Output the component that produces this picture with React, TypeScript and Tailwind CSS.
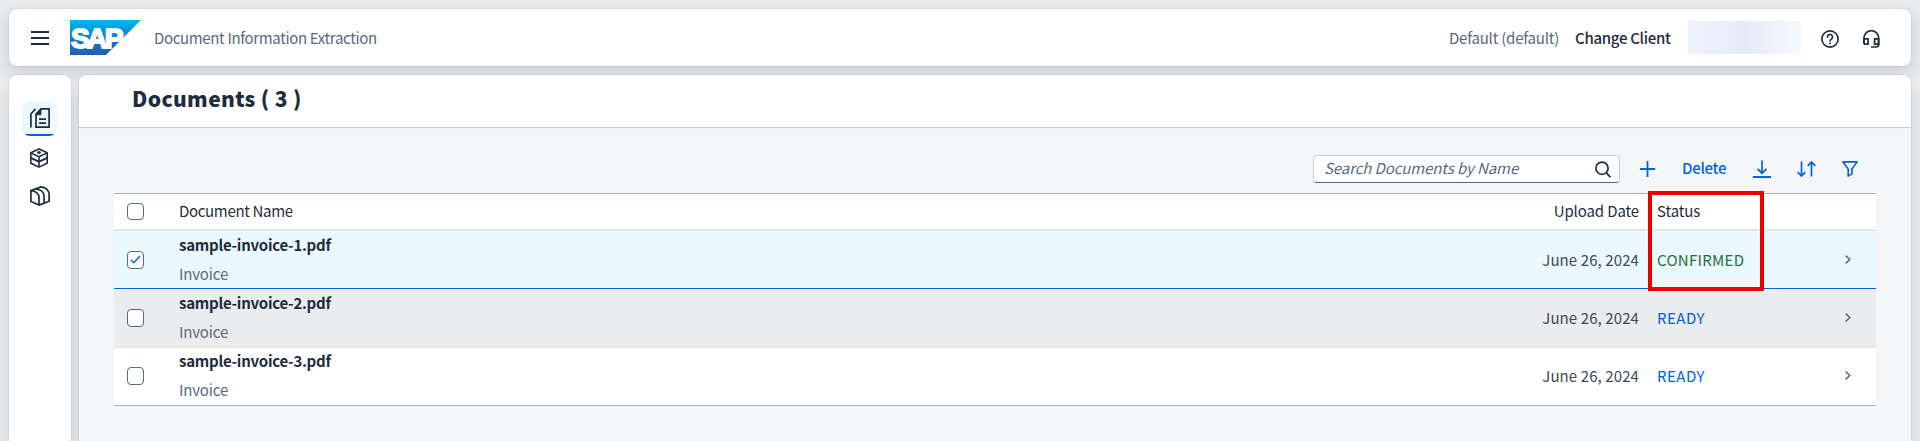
import React from "react";

const rows = [
  {
    name: "sample-invoice-1.pdf",
    status: "CONFIRMED",
    checked: true,
    row: "h-[58px] bg-[#ebf8ff] border-b-[#0064d9] pt-px",
    statusColor: "text-[#256f3a] tracking-[0.3px]",
  },
  {
    name: "sample-invoice-2.pdf",
    status: "READY",
    checked: false,
    row: "h-[59px] bg-[#eaecee] border-b-[#e5e5e5]",
    statusColor: "text-[#0064d9] tracking-[0.5px]",
  },
  {
    name: "sample-invoice-3.pdf",
    status: "READY",
    checked: false,
    row: "h-[58px] bg-white border-b-[#a8b2bd] pb-px",
    statusColor: "text-[#0064d9] tracking-[0.5px]",
  },
];

function Checkbox({ checked, tall }: { checked?: boolean; tall?: boolean }) {
  return (
    <span
      className={`flex w-[17px] shrink-0 items-center justify-center rounded-[4px] border border-[#556b82] bg-white ${tall ? "h-[18px]" : "h-[17px]"}`}
    >
      {checked && (
        <svg className="mb-px" width="11" height="9" viewBox="0 0 11 9" fill="none" stroke="#0064d9" strokeWidth="1.3">
          <path d="M.8 4.8 3.8 7.8 10 1" />
        </svg>
      )}
    </span>
  );
}

function Logo() {
  return (
    <svg width="71" height="35" viewBox="0 0 71 35">
      <defs>
        <linearGradient id="sap" x1="0" y1="0" x2="0" y2="1">
          <stop offset="0" stopColor="#00b8f1" />
          <stop offset="0.3" stopColor="#0695d9" />
          <stop offset="0.7" stopColor="#1870c5" />
          <stop offset="1" stopColor="#1f5fbb" />
        </linearGradient>
      </defs>
      <path d="M0 0H71L36 35H0Z" fill="url(#sap)" />
      <text
        x="1"
        y="27.5"
        fill="white"
        stroke="white"
        strokeWidth="1.8"
        fontFamily="Liberation Sans, sans-serif"
        fontWeight="700"
        fontSize="28"
        letterSpacing="-2.6"
      >
        SAP
      </text>
    </svg>
  );
}

function HelpIcon() {
  return (
    <svg width="18" height="18" viewBox="0 0 18 18" fill="none" stroke="#1d2d3e" strokeWidth="1.7" strokeLinecap="round">
      <circle cx="9" cy="9" r="8.1" />
      <path d="M6.5 7A2.5 2.5 0 1 1 10.3 9.1C9.4 9.7 9 10 9 10.8" />
      <path d="M9 13.4V13.5" strokeWidth="1.9" />
    </svg>
  );
}

function HeadsetIcon() {
  return (
    <svg width="17" height="18" viewBox="0 0 17 18" fill="none" stroke="#1d2d3e" strokeWidth="1.7">
      <path d="M1 14V8A7.2 7.2 0 0 1 15.6 8V14" />
      <path d="M1 8.8H5V14.2H2.2Q1 14.2 1 13Z" />
      <path d="M15.6 8.8H11.6V14.2H15.6Z" />
      <path d="M15.6 13.5V14.6Q15.6 17 13.2 17H8" />
    </svg>
  );
}

function DocsIcon() {
  return (
    <svg width="20" height="20" viewBox="0 0 20 20" fill="none" stroke="#1d2d3e" strokeWidth="1.7">
      <path d="M.9 19.5V6L5.6.8" />
      <path d="M6 19.1V6.2L11 .9H19.1V19.1Z" />
      <path d="M6 6.8H11V1Z" fill="#1d2d3e" strokeWidth="0.8" />
      <path d="M9 11.2H16M9 15.2H16" />
    </svg>
  );
}

function CubeIcon() {
  return (
    <svg width="18" height="20" viewBox="0 0 18 20" fill="none" stroke="#1d2d3e" strokeWidth="1.6" strokeLinejoin="round">
      <path d="M9 .9 17.2 4.7V15.2L9 19.1.8 15.2V4.7Z" />
      <path d="M.8 4.9 9 8.8 17.2 4.9M9 8.8V19" />
      <path d="M.8 9.9 9 13.7 17.2 9.9" strokeWidth="2" />
      <ellipse cx="9" cy="4.6" rx="1.7" ry="1" fill="#1d2d3e" strokeWidth="0.8" />
    </svg>
  );
}

function SlicesIcon() {
  return (
    <svg width="20" height="20" viewBox="0 0 20 20" fill="none" stroke="#1d2d3e" strokeWidth="1.7" strokeLinejoin="round">
      <path d="M.9 4.6V15.4L9 19.1V11.2C9 8 6 4.8 .9 4.6Z" />
      <path d="M.9 4.6 11 .9C16 1.2 19.1 5 19.1 8V15.2L9 19.1" />
      <path d="M6 2.8C11 3.6 14 6.6 14 9.8V17" />
    </svg>
  );
}

export default function App() {
  return (
    <div className="flex h-[441px] flex-col overflow-hidden bg-[#e9ebed] px-[9px] pt-[9px] font-['Noto_Sans_CJK_JP',sans-serif] text-[15px] leading-5 whitespace-nowrap text-[#1d2d3e]">
      <header className="flex h-[57px] shrink-0 items-center rounded-lg bg-white pr-[31px] pl-[22px] shadow-[0_0_2px_rgba(34,53,72,0.2),0_6px_16px_rgba(34,53,72,0.16)]">
        <svg width="18" height="14" viewBox="0 0 18 14" stroke="#1d2d3e" strokeWidth="2">
          <path d="M0 1H18M0 7H18M0 13H18" />
        </svg>
        <span className="ml-[21px]">
          <Logo />
        </span>
        <span className="ml-[13px] pt-px tracking-[-0.35px] text-[#556b82]">Document Information Extraction</span>
        <span className="ml-auto pt-px tracking-[-0.22px] text-[#556b82]">Default (default)</span>
        <span className="ml-4 w-[113px] pt-px font-medium tracking-[-0.3px]">Change Client</span>
        <span className="mb-px h-[33px] w-[113px] bg-linear-to-r from-[#eff3fd] via-[#e4ebf8] via-50% to-[#f5f8fe]" />
        <span className="ml-5 pt-[3px]">
          <HelpIcon />
        </span>
        <span className="ml-6 pt-[3px]">
          <HeadsetIcon />
        </span>
      </header>
      <div className="mt-[9px] flex min-h-0 flex-1 gap-2">
        <nav className="flex w-[62px] shrink-0 flex-col rounded-t-lg bg-white pt-[26px] shadow-[0_0_2px_rgba(34,53,72,0.2),0_12px_16px_rgba(34,53,72,0.1)]">
          <div className="ml-[13px] flex h-[35px] w-[35px] flex-col items-center justify-between overflow-hidden rounded-lg bg-[#ebf8ff] pt-[7px]">
            <DocsIcon />
            <span className="h-0.5 w-[33px] rounded-b-sm bg-[#0064d9]" />
          </div>
          <div className="mt-3 ml-[21px]">
            <CubeIcon />
          </div>
          <div className="mt-[18px] ml-[21px]">
            <SlicesIcon />
          </div>
        </nav>
        <main className="flex flex-1 flex-col rounded-t-lg bg-[#f5f6f7] shadow-[0_0_2px_rgba(34,53,72,0.2),0_12px_16px_rgba(34,53,72,0.1)]">
          <h1 className="h-[52px] rounded-t-lg bg-white pt-[11px] pl-[53px] text-[21px] leading-6 font-black tracking-[0.35px] shadow-[0_1px_1px_rgba(34,53,72,0.22)]">
            Documents ( 3 )
          </h1>
          <div className="mt-7 flex h-7 items-center pr-[53px]">
            <div className="ml-auto flex h-7 w-[307px] items-center justify-between rounded-[4px] border border-[#c7cdd4] border-b-[#556b82] bg-white pr-2 pl-[10px]">
              <span className="pb-0.5 tracking-[-0.1px] text-[#556b82] italic">Search Documents by Name</span>
              <svg width="16" height="17" viewBox="0 0 16 17" fill="none" stroke="#1d2d3e" strokeWidth="1.7">
                <circle cx="7" cy="7.2" r="6.1" />
                <path d="M11.3 11.8 15.4 16.2" />
              </svg>
            </div>
            <svg className="ml-5" width="15" height="16" viewBox="0 0 15 16" stroke="#0064d9" strokeWidth="1.8">
              <path d="M0 8H15M7.5 0V16" />
            </svg>
            <span className="ml-[27px] w-[71px] pb-0.5 font-medium tracking-[-0.3px] text-[#0064d9]">Delete</span>
            <svg width="18" height="18" viewBox="0 0 18 18" fill="none" stroke="#0064d9" strokeWidth="1.7">
              <path d="M9 .5V13M4.5 8.8 9 13.2 13.5 8.8" />
              <path d="M0 17H18" strokeWidth="2" />
            </svg>
            <svg className="ml-[26px]" width="19" height="16" viewBox="0 0 19 16" fill="none" stroke="#0064d9" strokeWidth="1.7">
              <path d="M4.5 .5V15M.7 11.2 4.5 15 8.3 11.2" />
              <path d="M14.5 15.5V1M10.7 4.8 14.5 1 18.3 4.8" />
            </svg>
            <svg className="ml-[26px]" width="16" height="16" viewBox="0 0 16 16" fill="none" stroke="#0064d9" strokeWidth="1.6" strokeLinejoin="round">
              <path d="M.9 .9H15.1L9.9 8V12.9L6.2 15.1V8Z" />
            </svg>
          </div>
          <div className="relative mx-[35px] mt-[10px] border-t border-[#a8b2bd]">
            <div className="flex h-[37px] items-center border-b-2 border-[#e5e5e5] bg-white pl-[13px]">
              <Checkbox />
              <span className="ml-[35px] pb-px tracking-[-0.33px]">Document Name</span>
              <span className="ml-auto pb-px tracking-[-0.12px]">Upload Date</span>
              <span className="ml-[18px] w-[219px] pb-px tracking-[-0.1px]">Status</span>
            </div>
            {rows.map((r) => (
              <div key={r.name} className={`flex items-center border-b pl-[13px] ${r.row}`}>
                <Checkbox checked={r.checked} tall />
                <div className="ml-[35px] pb-px">
                  <div className="font-bold tracking-[-0.25px]">{r.name}</div>
                  <div className="mt-[9px] tracking-[-0.15px] text-[#556b82]">Invoice</div>
                </div>
                <span className="ml-auto tracking-[0.1px] text-[#3a4a5b]">June 26, 2024</span>
                <div className="ml-[18px] flex w-[219px] items-center justify-between pr-[25px]">
                  <span className={r.statusColor}>{r.status}</span>
                  <svg className="mb-0.5" width="6" height="9" viewBox="0 0 6 9" fill="none" stroke="#556b82" strokeWidth="1.5">
                    <path d="M.7 .6 4.8 4.5 .7 8.4" />
                  </svg>
                </div>
              </div>
            ))}
            <div className="absolute -top-[3px] right-[112px] h-[100px] w-[116px] border-4 border-[#eb0000]" />
          </div>
        </main>
      </div>
    </div>
  );
}
